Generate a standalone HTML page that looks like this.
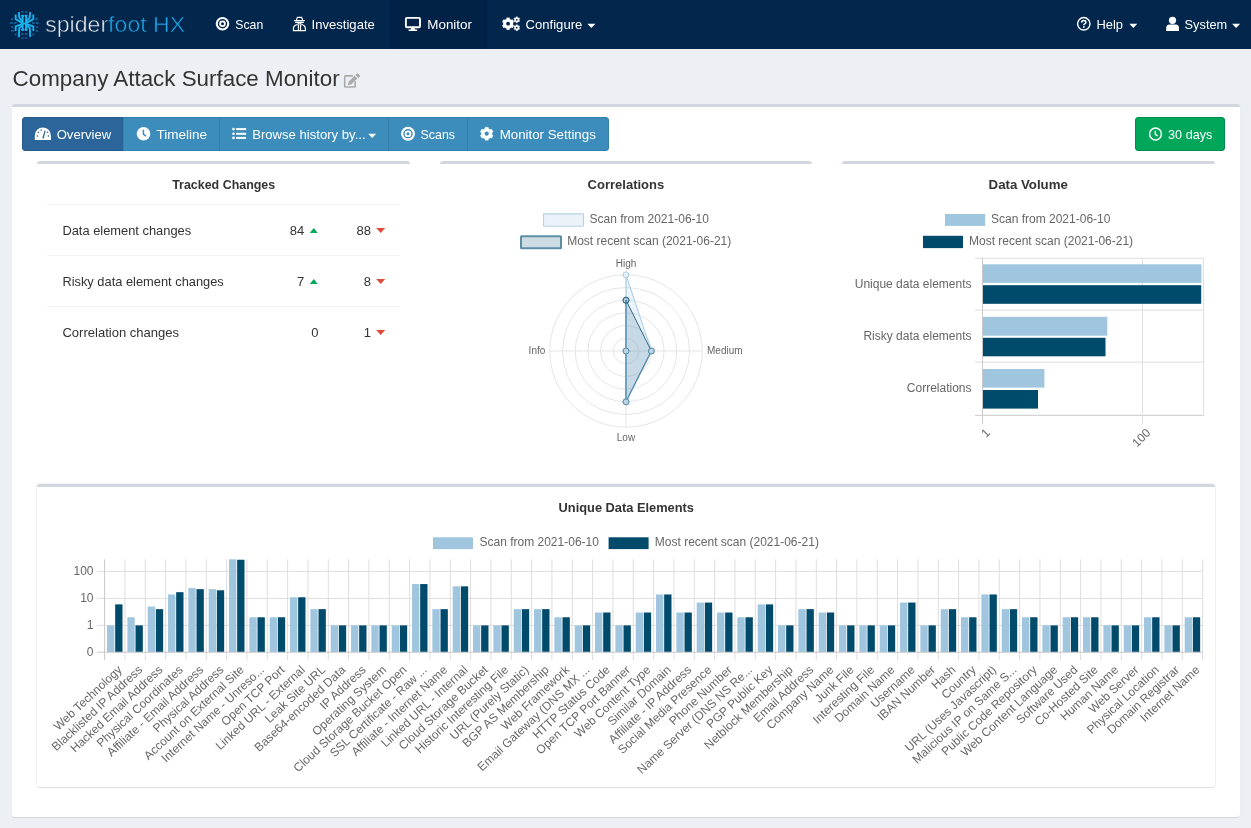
<!DOCTYPE html><html><head><meta charset="utf-8"><style>
*{box-sizing:border-box;margin:0;padding:0}
html,body{width:1251px;height:828px;overflow:hidden;background:#ecf0f5;font-family:"Liberation Sans",sans-serif;color:#333}
#nav{position:absolute;left:0;top:0;width:1251px;height:49px;background:#03264d}
#nav .act{position:absolute;left:390px;top:0;width:97px;height:49px;background:#022146}
#card{position:absolute;left:12px;top:104px;width:1228px;height:713px;background:#fff;border-top:3px solid #d2d6de;border-radius:3px;box-shadow:0 1px 1px rgba(0,0,0,0.1)}
.btn{position:absolute;top:117px;height:34px;background:#3c8dbc;border:1px solid #367fa9}
.box{position:absolute;background:#fff;border-top:3px solid #d2d6de;border-radius:3px}
.sep{position:absolute;left:47px;width:353px;height:1px;background:#f4f4f4}
svg{position:absolute;left:0;top:0;will-change:transform}
text{font-family:"Liberation Sans",sans-serif;white-space:pre}
</style></head><body>
<div id="nav"><div class="act"></div></div>
<div id="card"></div>
<div class="btn" style="left:22px;width:102px;background:#2b6599;border-color:#245a89;border-radius:3px 0 0 3px"></div>
<div class="btn" style="left:123px;width:97px"></div>
<div class="btn" style="left:219px;width:170px"></div>
<div class="btn" style="left:388px;width:80px"></div>
<div class="btn" style="left:467px;width:142px;border-radius:0 3px 3px 0"></div>
<div class="btn" style="left:1135px;width:90px;background:#00a65a;border-color:#008d4c;border-radius:3px"></div>
<div class="box" style="left:37px;top:161px;width:373px;height:300px"></div>
<div class="box" style="left:440px;top:161px;width:372px;height:300px"></div>
<div class="box" style="left:842px;top:161px;width:373px;height:300px"></div>
<div class="box" style="left:37px;top:484px;width:1178px;height:303px;box-shadow:0 1px 1px rgba(0,0,0,0.08),0 0 0 1px #f3f3f3"></div>
<div class="sep" style="top:204px"></div>
<div class="sep" style="top:255px"></div>
<div class="sep" style="top:306px"></div>
<svg width="1251" height="828" viewBox="0 0 1251 828"><rect x="21.12" y="11.10" width="2.6" height="1.6" rx="0.5" fill="#0f5f93"/>
<rect x="24.81" y="11.10" width="2.6" height="1.6" rx="0.5" fill="#0f5f93"/>
<rect x="11.06" y="17.98" width="2.2" height="2.2" rx="0.5" fill="#0f5f93"/>
<rect x="35.48" y="17.98" width="2.2" height="2.2" rx="0.5" fill="#0f5f93"/>
<rect x="9.94" y="22.08" width="2.8" height="1.8" rx="0.5" fill="#0f5f93"/>
<rect x="13.84" y="22.08" width="2.8" height="1.8" rx="0.5" fill="#0f5f93"/>
<rect x="31.90" y="22.08" width="2.8" height="1.8" rx="0.5" fill="#0f5f93"/>
<rect x="35.80" y="22.08" width="2.8" height="1.8" rx="0.5" fill="#0f5f93"/>
<rect x="11.16" y="25.88" width="2" height="2" rx="0.5" fill="#0f5f93"/>
<rect x="36.20" y="25.88" width="2" height="2" rx="0.5" fill="#0f5f93"/>
<rect x="11.07" y="29.88" width="3" height="1.8" rx="0.5" fill="#0f5f93"/>
<rect x="35.29" y="29.88" width="3" height="1.8" rx="0.5" fill="#0f5f93"/>
<rect x="14.65" y="33.48" width="2" height="2" rx="0.5" fill="#0f5f93"/>
<rect x="21.22" y="33.07" width="2.4" height="2" rx="0.5" fill="#0f5f93"/>
<rect x="24.91" y="33.07" width="2.4" height="2" rx="0.5" fill="#0f5f93"/>
<rect x="32.30" y="33.48" width="2" height="2" rx="0.5" fill="#0f5f93"/>
<rect x="21.12" y="37.17" width="2.6" height="1.6" rx="0.5" fill="#0f5f93"/>
<rect x="24.81" y="37.17" width="2.6" height="1.6" rx="0.5" fill="#0f5f93"/>
<polyline points="22.63,14.98 22.63,30.99" fill="none" stroke="#19b2ee" stroke-width="1.9" stroke-linejoin="round"/>
<polyline points="26.11,14.98 26.11,30.99" fill="none" stroke="#19b2ee" stroke-width="1.9" stroke-linejoin="round"/>
<polyline points="21.39,15.18 22.63,16.42 23.86,15.18" fill="none" stroke="#19b2ee" stroke-width="1.9" stroke-linejoin="round"/>
<polyline points="24.88,15.18 26.11,16.42 27.35,15.18" fill="none" stroke="#19b2ee" stroke-width="1.9" stroke-linejoin="round"/>
<polyline points="21.39,30.17 22.63,29.14 23.86,30.17" fill="none" stroke="#19b2ee" stroke-width="1.9" stroke-linejoin="round"/>
<polyline points="24.88,30.17 26.11,29.14 27.35,30.17" fill="none" stroke="#19b2ee" stroke-width="1.9" stroke-linejoin="round"/>
<polyline points="18.93,12.11 19.14,17.44 22.63,21.55" fill="none" stroke="#19b2ee" stroke-width="1.9" stroke-linejoin="round"/>
<polyline points="30.22,12.11 29.81,17.44 26.11,21.55" fill="none" stroke="#19b2ee" stroke-width="1.9" stroke-linejoin="round"/>
<polyline points="15.65,14.57 15.65,19.08 22.63,23.19" fill="none" stroke="#19b2ee" stroke-width="1.9" stroke-linejoin="round"/>
<polyline points="33.30,14.57 33.30,19.08 26.11,23.19" fill="none" stroke="#19b2ee" stroke-width="1.9" stroke-linejoin="round"/>
<polyline points="18.93,37.15 19.14,28.11 22.63,25.24" fill="none" stroke="#19b2ee" stroke-width="1.9" stroke-linejoin="round"/>
<polyline points="30.22,37.15 29.81,28.11 26.11,25.24" fill="none" stroke="#19b2ee" stroke-width="1.9" stroke-linejoin="round"/>
<polyline points="15.65,30.99 15.65,26.47 22.63,24.01" fill="none" stroke="#19b2ee" stroke-width="1.9" stroke-linejoin="round"/>
<polyline points="33.30,30.99 33.30,26.47 26.11,24.01" fill="none" stroke="#19b2ee" stroke-width="1.9" stroke-linejoin="round"/>
<polyline points="22.63,23.60 26.11,23.60" fill="none" stroke="#19b2ee" stroke-width="1.9" stroke-linejoin="round"/>
<text x="45.2" y="31.7" font-size="21.5" textLength="140" lengthAdjust="spacingAndGlyphs" stroke="#03264d" stroke-width="0.5"><tspan fill="#e6e9ee">spider</tspan><tspan fill="#1ea5e3">foot HX</tspan></text>
<circle cx="222.5" cy="23.8" r="5.75" fill="none" stroke="#fff" stroke-width="2.1"/>
<circle cx="222.5" cy="23.8" r="2.4" fill="none" stroke="#fff" stroke-width="1.8"/>
<text x="235.30" y="29.10" font-size="13" fill="#fff" text-anchor="start" textLength="27.90" lengthAdjust="spacingAndGlyphs">Scan</text>
<path d="M296.3,20.4 L297.5,17.3 L301.6,17.3 L302.8,20.4 M294.4,20.6 L304.4,20.6 M295.6,22.3 L303.4,22.3 M298,23.4 Q299.5,24.6 301,23.4 M293.4,30.6 L293.4,28.6 Q293.4,25.6 296.4,24.7 L297.6,24.7 M305.4,30.6 L305.4,28.6 Q305.4,25.6 302.4,24.7 L301.2,24.7 M293.4,30.6 L305.4,30.6 M298.4,25 L298.4,29.6 M300.5,25 L300.5,29.6" fill="none" stroke="#fff" stroke-width="1.15" stroke-linejoin="round" stroke-linecap="round"/>
<text x="311.60" y="29.10" font-size="13" fill="#fff" text-anchor="start" textLength="63.20" lengthAdjust="spacingAndGlyphs">Investigate</text>
<rect x="405.9" y="17.9" width="14.1" height="9.3" rx="1" fill="none" stroke="#fff" stroke-width="1.9"/>
<path d="M411.2,28 L414.6,28 L415,29.6 L417.2,29.6 L417.2,31 L408.6,31 L408.6,29.6 L410.8,29.6Z" fill="#fff"/>
<text x="427.30" y="29.10" font-size="13" fill="#fff" text-anchor="start" textLength="44.70" lengthAdjust="spacingAndGlyphs">Monitor</text>
<path d="M506.54,19.06 L506.69,17.77 L509.51,17.77 L509.66,19.06 L510.55,19.46 L511.34,20.02 L512.53,19.51 L513.95,21.96 L512.90,22.73 L513.00,23.70 L512.90,24.67 L513.95,25.44 L512.53,27.89 L511.34,27.38 L510.55,27.94 L509.66,28.34 L509.51,29.63 L506.69,29.63 L506.54,28.34 L505.65,27.94 L504.86,27.38 L503.67,27.89 L502.25,25.44 L503.30,24.67 L503.20,23.70 L503.30,22.73 L502.25,21.96 L503.67,19.51 L504.86,20.02 L505.65,19.46Z" fill="#fff" stroke="#fff" stroke-width="0.3" stroke-linejoin="round"/>
<circle cx="508.1" cy="23.7" r="1.9" fill="#03264d"/>
<path d="M516.03,17.53 L516.08,16.78 L517.52,16.78 L517.57,17.53 L518.00,17.72 L518.39,18.00 L519.05,17.67 L519.77,18.91 L519.15,19.33 L519.20,19.80 L519.15,20.27 L519.77,20.69 L519.05,21.93 L518.39,21.60 L518.00,21.88 L517.57,22.07 L517.52,22.82 L516.08,22.82 L516.03,22.07 L515.60,21.88 L515.21,21.60 L514.55,21.93 L513.83,20.69 L514.45,20.27 L514.40,19.80 L514.45,19.33 L513.83,18.91 L514.55,17.67 L515.21,18.00 L515.60,17.72Z" fill="#fff" stroke="#fff" stroke-width="0.3" stroke-linejoin="round"/>
<circle cx="516.8" cy="19.8" r="0.9" fill="#03264d"/>
<path d="M516.03,25.43 L516.08,24.68 L517.52,24.68 L517.57,25.43 L518.00,25.62 L518.39,25.90 L519.05,25.57 L519.77,26.81 L519.15,27.23 L519.20,27.70 L519.15,28.17 L519.77,28.59 L519.05,29.83 L518.39,29.50 L518.00,29.78 L517.57,29.97 L517.52,30.72 L516.08,30.72 L516.03,29.97 L515.60,29.78 L515.21,29.50 L514.55,29.83 L513.83,28.59 L514.45,28.17 L514.40,27.70 L514.45,27.23 L513.83,26.81 L514.55,25.57 L515.21,25.90 L515.60,25.62Z" fill="#fff" stroke="#fff" stroke-width="0.3" stroke-linejoin="round"/>
<circle cx="516.8" cy="27.7" r="0.9" fill="#03264d"/>
<text x="525.60" y="29.10" font-size="13" fill="#fff" text-anchor="start" textLength="56.70" lengthAdjust="spacingAndGlyphs">Configure</text>
<path d="M587.40,23.80 L595.40,23.80 L591.40,28.00Z" fill="#fff"/>
<circle cx="1083.8" cy="23.8" r="6.2" fill="none" stroke="#fff" stroke-width="1.45"/>
<path d="M1081.6,22.6 Q1081.7,20.6 1083.8,20.6 Q1085.9,20.6 1085.9,22.3 Q1085.9,23.3 1084.7,23.9 Q1083.8,24.3 1083.8,25.3" fill="none" stroke="#fff" stroke-width="1.5"/>
<rect x="1083.05" y="26.2" width="1.6" height="1.6" fill="#fff"/>
<text x="1096.40" y="29.10" font-size="13" fill="#fff" text-anchor="start" textLength="26.60" lengthAdjust="spacingAndGlyphs">Help</text>
<path d="M1129.30,23.80 L1137.30,23.80 L1133.30,28.00Z" fill="#fff"/>
<circle cx="1172.5" cy="20.3" r="3.6" fill="#fff"/>
<path d="M1166.2,30.9 L1166.2,28 Q1166.2,24.4 1169.6,24.4 L1175.6,24.4 Q1179,24.4 1179,28 L1179,30.9Z" fill="#fff"/>
<text x="1184.60" y="29.10" font-size="13" fill="#fff" text-anchor="start" textLength="42.60" lengthAdjust="spacingAndGlyphs">System</text>
<path d="M1232.10,23.80 L1240.10,23.80 L1236.10,28.00Z" fill="#fff"/>
<text x="12.60" y="86.00" font-size="22.5" fill="#333" text-anchor="start" textLength="327.00" lengthAdjust="spacingAndGlyphs">Company Attack Surface Monitor</text>
<path d="M352.8,75.9 L345.5,75.9 Q344.7,75.9 344.7,76.7 L344.7,86.2 Q344.7,87 345.5,87 L354.4,87 Q355.2,87 355.2,86.2 L355.2,81.2" fill="none" stroke="#aaa" stroke-width="1.6"/>
<path d="M347.9,84.9 L348.6,81.7 L354.5,75.8 L357.3,78.6 L351.2,84.5Z M355.4,74.9 L356.9,73.4 Q357.4,72.9 357.9,73.4 L359.9,75.4 Q360.4,75.9 359.9,76.4 L358.4,77.9Z" fill="#aaa"/>
<path d="M34.8,140 L34.8,135.5 A8.05,8.05 0 0 1 50.9,135.5 L50.9,140Z" fill="#fff"/>
<path d="M42.3,138.3 L44.6,130.5 L45.6,130.8 L43.8,138.6Z" fill="#2b6599"/>
<circle cx="37.3" cy="136" r="0.8" fill="#2b6599"/>
<circle cx="38.3" cy="132.3" r="0.8" fill="#2b6599"/>
<circle cx="41.2" cy="130" r="0.8" fill="#2b6599"/>
<circle cx="47.5" cy="132.3" r="0.8" fill="#2b6599"/>
<circle cx="48.4" cy="136" r="0.8" fill="#2b6599"/>
<text x="56.70" y="139.00" font-size="13" fill="#fff" text-anchor="start" textLength="54.50" lengthAdjust="spacingAndGlyphs">Overview</text>
<circle cx="143.5" cy="133.7" r="6.8" fill="#fff"/>
<path d="M143.4,129.8 L143.4,134.2 L145.9,136.1" fill="none" stroke="#3c8dbc" stroke-width="1.5"/>
<text x="156.40" y="139.00" font-size="13" fill="#fff" text-anchor="start" textLength="50.60" lengthAdjust="spacingAndGlyphs">Timeline</text>
<circle cx="233.5" cy="129.1" r="1.3" fill="#fff"/>
<rect x="236.1" y="128.1" width="10" height="2" fill="#fff"/>
<circle cx="233.5" cy="133.8" r="1.3" fill="#fff"/>
<rect x="236.1" y="132.8" width="10" height="2" fill="#fff"/>
<circle cx="233.5" cy="137.9" r="1.3" fill="#fff"/>
<rect x="236.1" y="136.9" width="10" height="2" fill="#fff"/>
<text x="252.20" y="139.00" font-size="13" fill="#fff" text-anchor="start" textLength="113.40" lengthAdjust="spacingAndGlyphs">Browse history by...</text>
<path d="M368.20,133.85 L376.20,133.85 L372.20,137.95Z" fill="#fff"/>
<circle cx="408" cy="133.75" r="5.85" fill="none" stroke="#fff" stroke-width="2.2"/>
<circle cx="408" cy="133.75" r="2.45" fill="none" stroke="#fff" stroke-width="1.8"/>
<text x="420.60" y="139.00" font-size="13" fill="#fff" text-anchor="start" textLength="34.40" lengthAdjust="spacingAndGlyphs">Scans</text>
<path d="M484.98,128.58 L485.15,127.18 L488.25,127.18 L488.42,128.58 L489.40,129.02 L490.27,129.65 L491.57,129.10 L493.12,131.78 L491.99,132.63 L492.10,133.70 L491.99,134.77 L493.12,135.62 L491.57,138.30 L490.27,137.75 L489.40,138.38 L488.42,138.82 L488.25,140.22 L485.15,140.22 L484.98,138.82 L484.00,138.38 L483.13,137.75 L481.83,138.30 L480.28,135.62 L481.41,134.77 L481.30,133.70 L481.41,132.63 L480.28,131.78 L481.83,129.10 L483.13,129.65 L484.00,129.02Z" fill="#fff" stroke="#fff" stroke-width="0.3" stroke-linejoin="round"/>
<circle cx="486.7" cy="133.7" r="2.1" fill="#3c8dbc"/>
<text x="499.70" y="139.00" font-size="13" fill="#fff" text-anchor="start" textLength="96.10" lengthAdjust="spacingAndGlyphs">Monitor Settings</text>
<circle cx="1155.5" cy="134" r="5.9" fill="none" stroke="#fff" stroke-width="1.5"/>
<path d="M1155.3,130.8 L1155.3,134.4 L1157.6,135.9" fill="none" stroke="#fff" stroke-width="1.4"/>
<text x="1168.10" y="139.00" font-size="13" fill="#fff" text-anchor="start" textLength="44.20" lengthAdjust="spacingAndGlyphs">30 days</text>
<text x="172.20" y="189.20" font-size="13" fill="#333" font-weight="bold" text-anchor="start" textLength="103.00" lengthAdjust="spacingAndGlyphs">Tracked Changes</text>
<text x="62.40" y="235.10" font-size="13" fill="#333" text-anchor="start" textLength="128.80" lengthAdjust="spacingAndGlyphs">Data element changes</text>
<text x="304.20" y="235.10" font-size="13" fill="#333" text-anchor="end">84</text>
<path d="M309.8,232.9 L317.8,232.9 L313.8,228.0Z" fill="#00a65a"/>
<text x="370.90" y="235.10" font-size="13" fill="#333" text-anchor="end">88</text>
<path d="M376.2,228.0 L385.2,228.0 L380.7,232.9Z" fill="#dd4b39"/>
<text x="62.40" y="286.10" font-size="13" fill="#333" text-anchor="start" textLength="161.40" lengthAdjust="spacingAndGlyphs">Risky data element changes</text>
<text x="304.20" y="286.10" font-size="13" fill="#333" text-anchor="end">7</text>
<path d="M309.8,283.9 L317.8,283.9 L313.8,279.0Z" fill="#00a65a"/>
<text x="370.90" y="286.10" font-size="13" fill="#333" text-anchor="end">8</text>
<path d="M376.2,279.0 L385.2,279.0 L380.7,283.9Z" fill="#dd4b39"/>
<text x="62.40" y="337.10" font-size="13" fill="#333" text-anchor="start" textLength="116.70" lengthAdjust="spacingAndGlyphs">Correlation changes</text>
<text x="318.60" y="337.10" font-size="13" fill="#333" text-anchor="end">0</text>
<text x="370.90" y="337.10" font-size="13" fill="#333" text-anchor="end">1</text>
<path d="M376.2,330.0 L385.2,330.0 L380.7,334.9Z" fill="#dd4b39"/>
<text x="587.60" y="189.20" font-size="13" fill="#333" font-weight="bold" text-anchor="start" textLength="76.60" lengthAdjust="spacingAndGlyphs">Correlations</text>
<rect x="543.5" y="213.9" width="40" height="12.3" rx="0.6" fill="#ebf3f9" stroke="#b3d3e6" stroke-width="1.1"/>
<text x="589.50" y="223.10" font-size="12" fill="#666" text-anchor="start">Scan from 2021-06-10</text>
<rect x="521" y="236.3" width="40" height="12" rx="0.6" fill="#cddbe2" stroke="#5e8ea6" stroke-width="2"/>
<text x="567.20" y="245.20" font-size="12" fill="#666" text-anchor="start">Most recent scan (2021-06-21)</text>
<circle cx="626" cy="351" r="12.70" fill="none" stroke="#e5e5e5" stroke-width="1"/>
<circle cx="626" cy="351" r="25.40" fill="none" stroke="#e5e5e5" stroke-width="1"/>
<circle cx="626" cy="351" r="38.10" fill="none" stroke="#e5e5e5" stroke-width="1"/>
<circle cx="626" cy="351" r="50.80" fill="none" stroke="#e5e5e5" stroke-width="1"/>
<circle cx="626" cy="351" r="63.50" fill="none" stroke="#e5e5e5" stroke-width="1"/>
<circle cx="626" cy="351" r="76.20" fill="none" stroke="#e5e5e5" stroke-width="1"/>
<path d="M626,274.8 L626,427.2 M549.8,351 L702.2,351" stroke="#e5e5e5" stroke-width="1"/>
<text x="626.00" y="267.00" font-size="10" fill="#666" text-anchor="middle">High</text>
<text x="626.00" y="440.80" font-size="10" fill="#666" text-anchor="middle">Low</text>
<text x="545.30" y="354.00" font-size="10" fill="#666" text-anchor="end">Info</text>
<text x="707.00" y="354.00" font-size="10" fill="#666" text-anchor="start">Medium</text>
<polygon points="626.00,274.80 651.40,351.00 626.00,401.80 626.00,351.00" fill="rgba(160,205,232,0.22)" stroke="#a3cbe3" stroke-width="1"/>
<polygon points="626.00,300.20 651.40,351.00 626.00,401.80 626.00,351.00" fill="rgba(20,85,120,0.17)" stroke="#2d6685" stroke-width="1"/>
<line x1="626" y1="300.2" x2="626" y2="401.8" stroke="#6fa3c2" stroke-width="2"/>
<line x1="626" y1="401.8" x2="651.4" y2="351" stroke="#6fa3c2" stroke-width="1.5" stroke-dasharray="1.5,0.7"/>
<circle cx="626.00" cy="274.80" r="3" fill="#e8f2f8" stroke="#a3cbe3" stroke-width="1"/>
<circle cx="651.40" cy="351.00" r="3" fill="#e8f2f8" stroke="#a3cbe3" stroke-width="1"/>
<circle cx="626.00" cy="401.80" r="3" fill="#e8f2f8" stroke="#a3cbe3" stroke-width="1"/>
<circle cx="626.00" cy="351.00" r="3" fill="#e8f2f8" stroke="#a3cbe3" stroke-width="1"/>
<circle cx="626.00" cy="300.20" r="3" fill="rgba(20,85,120,0.2)" stroke="#5b8eab" stroke-width="1"/>
<circle cx="651.40" cy="351.00" r="3" fill="rgba(20,85,120,0.2)" stroke="#5b8eab" stroke-width="1"/>
<circle cx="626.00" cy="401.80" r="3" fill="rgba(20,85,120,0.2)" stroke="#5b8eab" stroke-width="1"/>
<circle cx="626.00" cy="351.00" r="3" fill="rgba(20,85,120,0.2)" stroke="#5b8eab" stroke-width="1"/>
<circle cx="626" cy="300.2" r="3" fill="none" stroke="#2d6685" stroke-width="1"/>
<text x="988.60" y="189.20" font-size="13" fill="#333" font-weight="bold" text-anchor="start" textLength="79.20" lengthAdjust="spacingAndGlyphs">Data Volume</text>
<rect x="945" y="214.0" width="40.2" height="11.9" fill="#9fc5df"/>
<text x="991.00" y="223.10" font-size="12" fill="#666" text-anchor="start">Scan from 2021-06-10</text>
<rect x="923" y="235.8" width="40" height="12.3" fill="#004a6c"/>
<text x="969.00" y="245.20" font-size="12" fill="#666" text-anchor="start">Most recent scan (2021-06-21)</text>
<line x1="975" y1="258.2" x2="1203.6" y2="258.2" stroke="#dedede" stroke-width="1"/>
<line x1="975" y1="310.1" x2="1203.6" y2="310.1" stroke="#dedede" stroke-width="1"/>
<line x1="975" y1="362.1" x2="1203.6" y2="362.1" stroke="#dedede" stroke-width="1"/>
<line x1="975" y1="415.3" x2="1203.6" y2="415.3" stroke="#c8c8c8" stroke-width="1"/>
<line x1="982.5" y1="258" x2="982.5" y2="423.5" stroke="#c8c8c8" stroke-width="1"/>
<line x1="1142.4" y1="258" x2="1142.4" y2="423.5" stroke="#dedede" stroke-width="1"/>
<line x1="1203.6" y1="258" x2="1203.6" y2="415" stroke="#dedede" stroke-width="1"/>
<rect x="983.0" y="264.3" width="218.50" height="18.50" fill="#9fc5df"/>
<rect x="983.0" y="285.2" width="218.20" height="18.60" fill="#004a6c"/>
<rect x="983.0" y="316.8" width="124.30" height="18.90" fill="#9fc5df"/>
<rect x="983.0" y="337.8" width="122.50" height="18.50" fill="#004a6c"/>
<rect x="983.0" y="369" width="61.40" height="18.60" fill="#9fc5df"/>
<rect x="983.0" y="390" width="55.00" height="18.60" fill="#004a6c"/>
<text x="971.50" y="287.60" font-size="12" fill="#666" text-anchor="end">Unique data elements</text>
<text x="971.50" y="339.60" font-size="12" fill="#666" text-anchor="end">Risky data elements</text>
<text x="971.50" y="391.60" font-size="12" fill="#666" text-anchor="end">Correlations</text>
<text x="0.00" y="0.00" font-size="12" fill="#666" text-anchor="end" transform="translate(990.7,433.6) rotate(-45)">1</text>
<text x="0.00" y="0.00" font-size="12" fill="#666" text-anchor="end" transform="translate(1151.2,433.6) rotate(-45)">100</text>
<text x="558.60" y="512.30" font-size="13" fill="#333" font-weight="bold" text-anchor="start" textLength="135.30" lengthAdjust="spacingAndGlyphs">Unique Data Elements</text>
<rect x="433" y="537.3" width="40" height="11.8" fill="#9fc5df"/>
<text x="479.50" y="545.90" font-size="12" fill="#666" text-anchor="start">Scan from 2021-06-10</text>
<rect x="608.6" y="537.3" width="40" height="11.8" fill="#004a6c"/>
<text x="654.80" y="545.90" font-size="12" fill="#666" text-anchor="start">Most recent scan (2021-06-21)</text>
<line x1="97" y1="571.4" x2="1202.6" y2="571.4" stroke="#dedede" stroke-width="1"/>
<line x1="97" y1="598.4" x2="1202.6" y2="598.4" stroke="#dedede" stroke-width="1"/>
<line x1="97" y1="625.4" x2="1202.6" y2="625.4" stroke="#dedede" stroke-width="1"/>
<line x1="124.93" y1="559.3" x2="124.93" y2="660" stroke="#dedede" stroke-width="1"/>
<line x1="145.27" y1="559.3" x2="145.27" y2="660" stroke="#dedede" stroke-width="1"/>
<line x1="165.60" y1="559.3" x2="165.60" y2="660" stroke="#dedede" stroke-width="1"/>
<line x1="185.93" y1="559.3" x2="185.93" y2="660" stroke="#dedede" stroke-width="1"/>
<line x1="206.27" y1="559.3" x2="206.27" y2="660" stroke="#dedede" stroke-width="1"/>
<line x1="226.60" y1="559.3" x2="226.60" y2="660" stroke="#dedede" stroke-width="1"/>
<line x1="246.93" y1="559.3" x2="246.93" y2="660" stroke="#dedede" stroke-width="1"/>
<line x1="267.27" y1="559.3" x2="267.27" y2="660" stroke="#dedede" stroke-width="1"/>
<line x1="287.60" y1="559.3" x2="287.60" y2="660" stroke="#dedede" stroke-width="1"/>
<line x1="307.93" y1="559.3" x2="307.93" y2="660" stroke="#dedede" stroke-width="1"/>
<line x1="328.27" y1="559.3" x2="328.27" y2="660" stroke="#dedede" stroke-width="1"/>
<line x1="348.60" y1="559.3" x2="348.60" y2="660" stroke="#dedede" stroke-width="1"/>
<line x1="368.93" y1="559.3" x2="368.93" y2="660" stroke="#dedede" stroke-width="1"/>
<line x1="389.27" y1="559.3" x2="389.27" y2="660" stroke="#dedede" stroke-width="1"/>
<line x1="409.60" y1="559.3" x2="409.60" y2="660" stroke="#dedede" stroke-width="1"/>
<line x1="429.93" y1="559.3" x2="429.93" y2="660" stroke="#dedede" stroke-width="1"/>
<line x1="450.27" y1="559.3" x2="450.27" y2="660" stroke="#dedede" stroke-width="1"/>
<line x1="470.60" y1="559.3" x2="470.60" y2="660" stroke="#dedede" stroke-width="1"/>
<line x1="490.93" y1="559.3" x2="490.93" y2="660" stroke="#dedede" stroke-width="1"/>
<line x1="511.27" y1="559.3" x2="511.27" y2="660" stroke="#dedede" stroke-width="1"/>
<line x1="531.60" y1="559.3" x2="531.60" y2="660" stroke="#dedede" stroke-width="1"/>
<line x1="551.93" y1="559.3" x2="551.93" y2="660" stroke="#dedede" stroke-width="1"/>
<line x1="572.27" y1="559.3" x2="572.27" y2="660" stroke="#dedede" stroke-width="1"/>
<line x1="592.60" y1="559.3" x2="592.60" y2="660" stroke="#dedede" stroke-width="1"/>
<line x1="612.93" y1="559.3" x2="612.93" y2="660" stroke="#dedede" stroke-width="1"/>
<line x1="633.27" y1="559.3" x2="633.27" y2="660" stroke="#dedede" stroke-width="1"/>
<line x1="653.60" y1="559.3" x2="653.60" y2="660" stroke="#dedede" stroke-width="1"/>
<line x1="673.93" y1="559.3" x2="673.93" y2="660" stroke="#dedede" stroke-width="1"/>
<line x1="694.27" y1="559.3" x2="694.27" y2="660" stroke="#dedede" stroke-width="1"/>
<line x1="714.60" y1="559.3" x2="714.60" y2="660" stroke="#dedede" stroke-width="1"/>
<line x1="734.93" y1="559.3" x2="734.93" y2="660" stroke="#dedede" stroke-width="1"/>
<line x1="755.27" y1="559.3" x2="755.27" y2="660" stroke="#dedede" stroke-width="1"/>
<line x1="775.60" y1="559.3" x2="775.60" y2="660" stroke="#dedede" stroke-width="1"/>
<line x1="795.93" y1="559.3" x2="795.93" y2="660" stroke="#dedede" stroke-width="1"/>
<line x1="816.27" y1="559.3" x2="816.27" y2="660" stroke="#dedede" stroke-width="1"/>
<line x1="836.60" y1="559.3" x2="836.60" y2="660" stroke="#dedede" stroke-width="1"/>
<line x1="856.93" y1="559.3" x2="856.93" y2="660" stroke="#dedede" stroke-width="1"/>
<line x1="877.27" y1="559.3" x2="877.27" y2="660" stroke="#dedede" stroke-width="1"/>
<line x1="897.60" y1="559.3" x2="897.60" y2="660" stroke="#dedede" stroke-width="1"/>
<line x1="917.93" y1="559.3" x2="917.93" y2="660" stroke="#dedede" stroke-width="1"/>
<line x1="938.27" y1="559.3" x2="938.27" y2="660" stroke="#dedede" stroke-width="1"/>
<line x1="958.60" y1="559.3" x2="958.60" y2="660" stroke="#dedede" stroke-width="1"/>
<line x1="978.93" y1="559.3" x2="978.93" y2="660" stroke="#dedede" stroke-width="1"/>
<line x1="999.27" y1="559.3" x2="999.27" y2="660" stroke="#dedede" stroke-width="1"/>
<line x1="1019.60" y1="559.3" x2="1019.60" y2="660" stroke="#dedede" stroke-width="1"/>
<line x1="1039.93" y1="559.3" x2="1039.93" y2="660" stroke="#dedede" stroke-width="1"/>
<line x1="1060.27" y1="559.3" x2="1060.27" y2="660" stroke="#dedede" stroke-width="1"/>
<line x1="1080.60" y1="559.3" x2="1080.60" y2="660" stroke="#dedede" stroke-width="1"/>
<line x1="1100.93" y1="559.3" x2="1100.93" y2="660" stroke="#dedede" stroke-width="1"/>
<line x1="1121.27" y1="559.3" x2="1121.27" y2="660" stroke="#dedede" stroke-width="1"/>
<line x1="1141.60" y1="559.3" x2="1141.60" y2="660" stroke="#dedede" stroke-width="1"/>
<line x1="1161.93" y1="559.3" x2="1161.93" y2="660" stroke="#dedede" stroke-width="1"/>
<line x1="1182.27" y1="559.3" x2="1182.27" y2="660" stroke="#dedede" stroke-width="1"/>
<line x1="1202.60" y1="559.3" x2="1202.60" y2="660" stroke="#dedede" stroke-width="1"/>
<rect x="107.04" y="625.40" width="7.32" height="26.80" fill="#9fc5df"/>
<rect x="115.17" y="604.39" width="7.32" height="47.81" fill="#004a6c"/>
<rect x="127.37" y="617.27" width="7.32" height="34.93" fill="#9fc5df"/>
<rect x="135.51" y="625.40" width="7.32" height="26.80" fill="#004a6c"/>
<rect x="147.71" y="606.53" width="7.32" height="45.67" fill="#9fc5df"/>
<rect x="155.84" y="609.14" width="7.32" height="43.06" fill="#004a6c"/>
<rect x="168.04" y="594.45" width="7.32" height="57.75" fill="#9fc5df"/>
<rect x="176.17" y="592.18" width="7.32" height="60.02" fill="#004a6c"/>
<rect x="188.37" y="588.13" width="7.32" height="64.07" fill="#9fc5df"/>
<rect x="196.51" y="589.15" width="7.32" height="63.05" fill="#004a6c"/>
<rect x="208.71" y="589.15" width="7.32" height="63.05" fill="#9fc5df"/>
<rect x="216.84" y="590.27" width="7.32" height="61.93" fill="#004a6c"/>
<rect x="229.04" y="559.30" width="7.32" height="92.90" fill="#9fc5df"/>
<rect x="237.17" y="559.75" width="7.32" height="92.45" fill="#004a6c"/>
<rect x="249.37" y="617.27" width="7.32" height="34.93" fill="#9fc5df"/>
<rect x="257.51" y="617.27" width="7.32" height="34.93" fill="#004a6c"/>
<rect x="269.71" y="617.27" width="7.32" height="34.93" fill="#9fc5df"/>
<rect x="277.84" y="617.27" width="7.32" height="34.93" fill="#004a6c"/>
<rect x="290.04" y="597.28" width="7.32" height="54.92" fill="#9fc5df"/>
<rect x="298.17" y="597.28" width="7.32" height="54.92" fill="#004a6c"/>
<rect x="310.37" y="609.14" width="7.32" height="43.06" fill="#9fc5df"/>
<rect x="318.51" y="609.14" width="7.32" height="43.06" fill="#004a6c"/>
<rect x="330.71" y="625.40" width="7.32" height="26.80" fill="#9fc5df"/>
<rect x="338.84" y="625.40" width="7.32" height="26.80" fill="#004a6c"/>
<rect x="351.04" y="625.40" width="7.32" height="26.80" fill="#9fc5df"/>
<rect x="359.17" y="625.40" width="7.32" height="26.80" fill="#004a6c"/>
<rect x="371.37" y="625.40" width="7.32" height="26.80" fill="#9fc5df"/>
<rect x="379.51" y="625.40" width="7.32" height="26.80" fill="#004a6c"/>
<rect x="391.71" y="625.40" width="7.32" height="26.80" fill="#9fc5df"/>
<rect x="399.84" y="625.40" width="7.32" height="26.80" fill="#004a6c"/>
<rect x="412.04" y="584.05" width="7.32" height="68.15" fill="#9fc5df"/>
<rect x="420.17" y="584.05" width="7.32" height="68.15" fill="#004a6c"/>
<rect x="432.37" y="609.14" width="7.32" height="43.06" fill="#9fc5df"/>
<rect x="440.51" y="609.14" width="7.32" height="43.06" fill="#004a6c"/>
<rect x="452.71" y="586.33" width="7.32" height="65.87" fill="#9fc5df"/>
<rect x="460.84" y="586.33" width="7.32" height="65.87" fill="#004a6c"/>
<rect x="473.04" y="625.40" width="7.32" height="26.80" fill="#9fc5df"/>
<rect x="481.17" y="625.40" width="7.32" height="26.80" fill="#004a6c"/>
<rect x="493.37" y="625.40" width="7.32" height="26.80" fill="#9fc5df"/>
<rect x="501.51" y="625.40" width="7.32" height="26.80" fill="#004a6c"/>
<rect x="513.71" y="609.14" width="7.32" height="43.06" fill="#9fc5df"/>
<rect x="521.84" y="609.14" width="7.32" height="43.06" fill="#004a6c"/>
<rect x="534.04" y="609.14" width="7.32" height="43.06" fill="#9fc5df"/>
<rect x="542.17" y="609.14" width="7.32" height="43.06" fill="#004a6c"/>
<rect x="554.37" y="617.27" width="7.32" height="34.93" fill="#9fc5df"/>
<rect x="562.51" y="617.27" width="7.32" height="34.93" fill="#004a6c"/>
<rect x="574.71" y="625.40" width="7.32" height="26.80" fill="#9fc5df"/>
<rect x="582.84" y="625.40" width="7.32" height="26.80" fill="#004a6c"/>
<rect x="595.04" y="612.52" width="7.32" height="39.68" fill="#9fc5df"/>
<rect x="603.17" y="612.52" width="7.32" height="39.68" fill="#004a6c"/>
<rect x="615.37" y="625.40" width="7.32" height="26.80" fill="#9fc5df"/>
<rect x="623.51" y="625.40" width="7.32" height="26.80" fill="#004a6c"/>
<rect x="635.71" y="612.52" width="7.32" height="39.68" fill="#9fc5df"/>
<rect x="643.84" y="612.52" width="7.32" height="39.68" fill="#004a6c"/>
<rect x="656.04" y="594.45" width="7.32" height="57.75" fill="#9fc5df"/>
<rect x="664.17" y="594.45" width="7.32" height="57.75" fill="#004a6c"/>
<rect x="676.37" y="612.52" width="7.32" height="39.68" fill="#9fc5df"/>
<rect x="684.51" y="612.52" width="7.32" height="39.68" fill="#004a6c"/>
<rect x="696.71" y="602.58" width="7.32" height="49.62" fill="#9fc5df"/>
<rect x="704.84" y="602.58" width="7.32" height="49.62" fill="#004a6c"/>
<rect x="717.04" y="612.52" width="7.32" height="39.68" fill="#9fc5df"/>
<rect x="725.17" y="612.52" width="7.32" height="39.68" fill="#004a6c"/>
<rect x="737.37" y="617.27" width="7.32" height="34.93" fill="#9fc5df"/>
<rect x="745.51" y="617.27" width="7.32" height="34.93" fill="#004a6c"/>
<rect x="757.71" y="604.39" width="7.32" height="47.81" fill="#9fc5df"/>
<rect x="765.84" y="604.39" width="7.32" height="47.81" fill="#004a6c"/>
<rect x="778.04" y="625.40" width="7.32" height="26.80" fill="#9fc5df"/>
<rect x="786.17" y="625.40" width="7.32" height="26.80" fill="#004a6c"/>
<rect x="798.37" y="609.14" width="7.32" height="43.06" fill="#9fc5df"/>
<rect x="806.51" y="609.14" width="7.32" height="43.06" fill="#004a6c"/>
<rect x="818.71" y="612.52" width="7.32" height="39.68" fill="#9fc5df"/>
<rect x="826.84" y="612.52" width="7.32" height="39.68" fill="#004a6c"/>
<rect x="839.04" y="625.40" width="7.32" height="26.80" fill="#9fc5df"/>
<rect x="847.17" y="625.40" width="7.32" height="26.80" fill="#004a6c"/>
<rect x="859.37" y="625.40" width="7.32" height="26.80" fill="#9fc5df"/>
<rect x="867.51" y="625.40" width="7.32" height="26.80" fill="#004a6c"/>
<rect x="879.71" y="625.40" width="7.32" height="26.80" fill="#9fc5df"/>
<rect x="887.84" y="625.40" width="7.32" height="26.80" fill="#004a6c"/>
<rect x="900.04" y="602.58" width="7.32" height="49.62" fill="#9fc5df"/>
<rect x="908.17" y="602.58" width="7.32" height="49.62" fill="#004a6c"/>
<rect x="920.37" y="625.40" width="7.32" height="26.80" fill="#9fc5df"/>
<rect x="928.51" y="625.40" width="7.32" height="26.80" fill="#004a6c"/>
<rect x="940.71" y="609.14" width="7.32" height="43.06" fill="#9fc5df"/>
<rect x="948.84" y="609.14" width="7.32" height="43.06" fill="#004a6c"/>
<rect x="961.04" y="617.27" width="7.32" height="34.93" fill="#9fc5df"/>
<rect x="969.17" y="617.27" width="7.32" height="34.93" fill="#004a6c"/>
<rect x="981.37" y="594.45" width="7.32" height="57.75" fill="#9fc5df"/>
<rect x="989.51" y="594.45" width="7.32" height="57.75" fill="#004a6c"/>
<rect x="1001.71" y="609.14" width="7.32" height="43.06" fill="#9fc5df"/>
<rect x="1009.84" y="609.14" width="7.32" height="43.06" fill="#004a6c"/>
<rect x="1022.04" y="617.27" width="7.32" height="34.93" fill="#9fc5df"/>
<rect x="1030.17" y="617.27" width="7.32" height="34.93" fill="#004a6c"/>
<rect x="1042.37" y="625.40" width="7.32" height="26.80" fill="#9fc5df"/>
<rect x="1050.51" y="625.40" width="7.32" height="26.80" fill="#004a6c"/>
<rect x="1062.71" y="617.27" width="7.32" height="34.93" fill="#9fc5df"/>
<rect x="1070.84" y="617.27" width="7.32" height="34.93" fill="#004a6c"/>
<rect x="1083.04" y="617.27" width="7.32" height="34.93" fill="#9fc5df"/>
<rect x="1091.17" y="617.27" width="7.32" height="34.93" fill="#004a6c"/>
<rect x="1103.37" y="625.40" width="7.32" height="26.80" fill="#9fc5df"/>
<rect x="1111.51" y="625.40" width="7.32" height="26.80" fill="#004a6c"/>
<rect x="1123.71" y="625.40" width="7.32" height="26.80" fill="#9fc5df"/>
<rect x="1131.84" y="625.40" width="7.32" height="26.80" fill="#004a6c"/>
<rect x="1144.04" y="617.27" width="7.32" height="34.93" fill="#9fc5df"/>
<rect x="1152.17" y="617.27" width="7.32" height="34.93" fill="#004a6c"/>
<rect x="1164.37" y="625.40" width="7.32" height="26.80" fill="#9fc5df"/>
<rect x="1172.51" y="625.40" width="7.32" height="26.80" fill="#004a6c"/>
<rect x="1184.71" y="617.27" width="7.32" height="34.93" fill="#9fc5df"/>
<rect x="1192.84" y="617.27" width="7.32" height="34.93" fill="#004a6c"/>
<line x1="97" y1="652.2" x2="1202.6" y2="652.2" stroke="#c8c8c8" stroke-width="1"/>
<line x1="104.6" y1="559.3" x2="104.6" y2="660" stroke="#c8c8c8" stroke-width="1"/>
<text x="93.50" y="575.00" font-size="12" fill="#666" text-anchor="end">100</text>
<text x="93.50" y="602.00" font-size="12" fill="#666" text-anchor="end">10</text>
<text x="93.50" y="629.00" font-size="12" fill="#666" text-anchor="end">1</text>
<text x="93.50" y="655.80" font-size="12" fill="#666" text-anchor="end">0</text>
<text x="0.00" y="4.30" font-size="12" fill="#666" text-anchor="end" transform="translate(119.77,667.6) rotate(-43)">Web Technology</text>
<text x="0.00" y="4.30" font-size="12" fill="#666" text-anchor="end" transform="translate(140.10,667.6) rotate(-43)">Blacklisted IP Address</text>
<text x="0.00" y="4.30" font-size="12" fill="#666" text-anchor="end" transform="translate(160.43,667.6) rotate(-43)">Hacked Email Address</text>
<text x="0.00" y="4.30" font-size="12" fill="#666" text-anchor="end" transform="translate(180.77,667.6) rotate(-43)">Physical Coordinates</text>
<text x="0.00" y="4.30" font-size="12" fill="#666" text-anchor="end" transform="translate(201.10,667.6) rotate(-43)">Affiliate - Email Address</text>
<text x="0.00" y="4.30" font-size="12" fill="#666" text-anchor="end" transform="translate(221.43,667.6) rotate(-43)">Physical Address</text>
<text x="0.00" y="4.30" font-size="12" fill="#666" text-anchor="end" transform="translate(241.77,667.6) rotate(-43)">Account on External Site</text>
<text x="0.00" y="4.30" font-size="12" fill="#666" text-anchor="end" transform="translate(262.10,667.6) rotate(-43)">Internet Name - Unreso...</text>
<text x="0.00" y="4.30" font-size="12" fill="#666" text-anchor="end" transform="translate(282.43,667.6) rotate(-43)">Open TCP Port</text>
<text x="0.00" y="4.30" font-size="12" fill="#666" text-anchor="end" transform="translate(302.77,667.6) rotate(-43)">Linked URL - External</text>
<text x="0.00" y="4.30" font-size="12" fill="#666" text-anchor="end" transform="translate(323.10,667.6) rotate(-43)">Leak Site URL</text>
<text x="0.00" y="4.30" font-size="12" fill="#666" text-anchor="end" transform="translate(343.43,667.6) rotate(-43)">Base64-encoded Data</text>
<text x="0.00" y="4.30" font-size="12" fill="#666" text-anchor="end" transform="translate(363.77,667.6) rotate(-43)">IP Address</text>
<text x="0.00" y="4.30" font-size="12" fill="#666" text-anchor="end" transform="translate(384.10,667.6) rotate(-43)">Operating System</text>
<text x="0.00" y="4.30" font-size="12" fill="#666" text-anchor="end" transform="translate(404.43,667.6) rotate(-43)">Cloud Storage Bucket Open</text>
<text x="0.00" y="4.30" font-size="12" fill="#666" text-anchor="end" transform="translate(424.77,667.6) rotate(-43)">SSL Certificate - Raw ...</text>
<text x="0.00" y="4.30" font-size="12" fill="#666" text-anchor="end" transform="translate(445.10,667.6) rotate(-43)">Affiliate - Internet Name</text>
<text x="0.00" y="4.30" font-size="12" fill="#666" text-anchor="end" transform="translate(465.43,667.6) rotate(-43)">Linked URL - Internal</text>
<text x="0.00" y="4.30" font-size="12" fill="#666" text-anchor="end" transform="translate(485.77,667.6) rotate(-43)">Cloud Storage Bucket</text>
<text x="0.00" y="4.30" font-size="12" fill="#666" text-anchor="end" transform="translate(506.10,667.6) rotate(-43)">Historic Interesting File</text>
<text x="0.00" y="4.30" font-size="12" fill="#666" text-anchor="end" transform="translate(526.43,667.6) rotate(-43)">URL (Purely Static)</text>
<text x="0.00" y="4.30" font-size="12" fill="#666" text-anchor="end" transform="translate(546.77,667.6) rotate(-43)">BGP AS Membership</text>
<text x="0.00" y="4.30" font-size="12" fill="#666" text-anchor="end" transform="translate(567.10,667.6) rotate(-43)">Web Framework</text>
<text x="0.00" y="4.30" font-size="12" fill="#666" text-anchor="end" transform="translate(587.43,667.6) rotate(-43)">Email Gateway (DNS MX ...</text>
<text x="0.00" y="4.30" font-size="12" fill="#666" text-anchor="end" transform="translate(607.77,667.6) rotate(-43)">HTTP Status Code</text>
<text x="0.00" y="4.30" font-size="12" fill="#666" text-anchor="end" transform="translate(628.10,667.6) rotate(-43)">Open TCP Port Banner</text>
<text x="0.00" y="4.30" font-size="12" fill="#666" text-anchor="end" transform="translate(648.43,667.6) rotate(-43)">Web Content Type</text>
<text x="0.00" y="4.30" font-size="12" fill="#666" text-anchor="end" transform="translate(668.77,667.6) rotate(-43)">Similar Domain</text>
<text x="0.00" y="4.30" font-size="12" fill="#666" text-anchor="end" transform="translate(689.10,667.6) rotate(-43)">Affiliate - IP Address</text>
<text x="0.00" y="4.30" font-size="12" fill="#666" text-anchor="end" transform="translate(709.43,667.6) rotate(-43)">Social Media Presence</text>
<text x="0.00" y="4.30" font-size="12" fill="#666" text-anchor="end" transform="translate(729.77,667.6) rotate(-43)">Phone Number</text>
<text x="0.00" y="4.30" font-size="12" fill="#666" text-anchor="end" transform="translate(750.10,667.6) rotate(-43)">Name Server (DNS NS Re...</text>
<text x="0.00" y="4.30" font-size="12" fill="#666" text-anchor="end" transform="translate(770.43,667.6) rotate(-43)">PGP Public Key</text>
<text x="0.00" y="4.30" font-size="12" fill="#666" text-anchor="end" transform="translate(790.77,667.6) rotate(-43)">Netblock Membership</text>
<text x="0.00" y="4.30" font-size="12" fill="#666" text-anchor="end" transform="translate(811.10,667.6) rotate(-43)">Email Address</text>
<text x="0.00" y="4.30" font-size="12" fill="#666" text-anchor="end" transform="translate(831.43,667.6) rotate(-43)">Company Name</text>
<text x="0.00" y="4.30" font-size="12" fill="#666" text-anchor="end" transform="translate(851.77,667.6) rotate(-43)">Junk File</text>
<text x="0.00" y="4.30" font-size="12" fill="#666" text-anchor="end" transform="translate(872.10,667.6) rotate(-43)">Interesting File</text>
<text x="0.00" y="4.30" font-size="12" fill="#666" text-anchor="end" transform="translate(892.43,667.6) rotate(-43)">Domain Name</text>
<text x="0.00" y="4.30" font-size="12" fill="#666" text-anchor="end" transform="translate(912.77,667.6) rotate(-43)">Username</text>
<text x="0.00" y="4.30" font-size="12" fill="#666" text-anchor="end" transform="translate(933.10,667.6) rotate(-43)">IBAN Number</text>
<text x="0.00" y="4.30" font-size="12" fill="#666" text-anchor="end" transform="translate(953.43,667.6) rotate(-43)">Hash</text>
<text x="0.00" y="4.30" font-size="12" fill="#666" text-anchor="end" transform="translate(973.77,667.6) rotate(-43)">Country</text>
<text x="0.00" y="4.30" font-size="12" fill="#666" text-anchor="end" transform="translate(994.10,667.6) rotate(-43)">URL (Uses Javascript)</text>
<text x="0.00" y="4.30" font-size="12" fill="#666" text-anchor="end" transform="translate(1014.43,667.6) rotate(-43)">Malicious IP on Same S...</text>
<text x="0.00" y="4.30" font-size="12" fill="#666" text-anchor="end" transform="translate(1034.77,667.6) rotate(-43)">Public Code Repository</text>
<text x="0.00" y="4.30" font-size="12" fill="#666" text-anchor="end" transform="translate(1055.10,667.6) rotate(-43)">Web Content Language</text>
<text x="0.00" y="4.30" font-size="12" fill="#666" text-anchor="end" transform="translate(1075.43,667.6) rotate(-43)">Software Used</text>
<text x="0.00" y="4.30" font-size="12" fill="#666" text-anchor="end" transform="translate(1095.77,667.6) rotate(-43)">Co-Hosted Site</text>
<text x="0.00" y="4.30" font-size="12" fill="#666" text-anchor="end" transform="translate(1116.10,667.6) rotate(-43)">Human Name</text>
<text x="0.00" y="4.30" font-size="12" fill="#666" text-anchor="end" transform="translate(1136.43,667.6) rotate(-43)">Web Server</text>
<text x="0.00" y="4.30" font-size="12" fill="#666" text-anchor="end" transform="translate(1156.77,667.6) rotate(-43)">Physical Location</text>
<text x="0.00" y="4.30" font-size="12" fill="#666" text-anchor="end" transform="translate(1177.10,667.6) rotate(-43)">Domain Registrar</text>
<text x="0.00" y="4.30" font-size="12" fill="#666" text-anchor="end" transform="translate(1197.43,667.6) rotate(-43)">Internet Name</text></svg>
</body></html>
